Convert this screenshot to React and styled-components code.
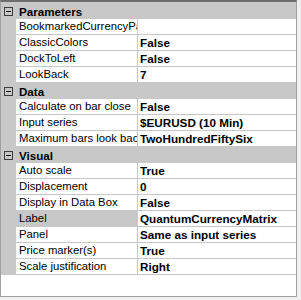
import React from "react";
import styled, { createGlobalStyle } from "styled-components";

const GlobalStyle = createGlobalStyle`
  body {
    margin: 0;
    background: #f0f0f0;
    font-family: "Liberation Sans", Arial, sans-serif;
  }
`;

const GRAY = "#c8c8c8";

const Grid = styled.div`
  box-sizing: border-box;
  width: 297px;
  height: 297px;
  background: #ffffff;
  border-top: 2px solid #6e6e6e;
  border-left: 1px solid #a0a0a0;
  border-right: 1px solid #a0a0a0;
  border-bottom: 1px solid #a0a0a0;
  overflow: hidden;
`;

const Category = styled.div`
  display: flex;
  align-items: center;
  height: ${(p) => (p.first ? 17 : 16)}px;
  padding-top: ${(p) => (p.first ? 1 : 0)}px;
  box-sizing: border-box;
  background: ${GRAY};
  font-weight: bold;
  font-size: 11.6px;
  color: #000;
`;

const Expander = styled.span`
  box-sizing: border-box;
  width: 9px;
  height: 9px;
  margin: 0 6px 0 3px;
  border: 1px solid #3c3c3c;
  background: ${GRAY};
  display: flex;
  align-items: center;
  justify-content: center;

  &::after {
    content: "";
    width: 5px;
    height: 1px;
    background: #000;
  }
`;

const Row = styled.div`
  display: grid;
  grid-template-columns: 15px 122px 1fr;
  height: 16px;
  box-sizing: border-box;
  border-bottom: 1px solid ${GRAY};
  font-size: 11.3px;
  line-height: 15px;
`;

const Gutter = styled.div`
  background: ${GRAY};
`;

const Name = styled.div`
  padding-left: 3px;
  border-right: 1px solid ${GRAY};
  background: ${(p) => (p.selected ? GRAY : "#ffffff")};
  white-space: nowrap;
  overflow: hidden;
  color: #000;
`;

const Value = styled.div`
  padding-left: 2px;
  font-weight: bold;
  font-size: 11.7px;
  white-space: nowrap;
  overflow: hidden;
  color: #000;
`;

const groups = [
  {
    title: "Parameters",
    rows: [
      ["BookmarkedCurrencyPair", ""],
      ["ClassicColors", "False"],
      ["DockToLeft", "False"],
      ["LookBack", "7"],
    ],
  },
  {
    title: "Data",
    rows: [
      ["Calculate on bar close", "False"],
      ["Input series", "$EURUSD (10 Min)"],
      ["Maximum bars look back", "TwoHundredFiftySix"],
    ],
  },
  {
    title: "Visual",
    rows: [
      ["Auto scale", "True"],
      ["Displacement", "0"],
      ["Display in Data Box", "False"],
      ["Label", "QuantumCurrencyMatrix"],
      ["Panel", "Same as input series"],
      ["Price marker(s)", "True"],
      ["Scale justification", "Right"],
    ],
  },
];

export default function App() {
  return (
    <>
      <GlobalStyle />
      <Grid>
        {groups.map((g, gi) => (
          <React.Fragment key={g.title}>
            <Category first={gi === 0}>
              <Expander />
              {g.title}
            </Category>
            {g.rows.map(([name, value]) => (
              <Row key={name}>
                <Gutter />
                <Name selected={name === "Label"}>{name}</Name>
                <Value>{value}</Value>
              </Row>
            ))}
          </React.Fragment>
        ))}
      </Grid>
    </>
  );
}
